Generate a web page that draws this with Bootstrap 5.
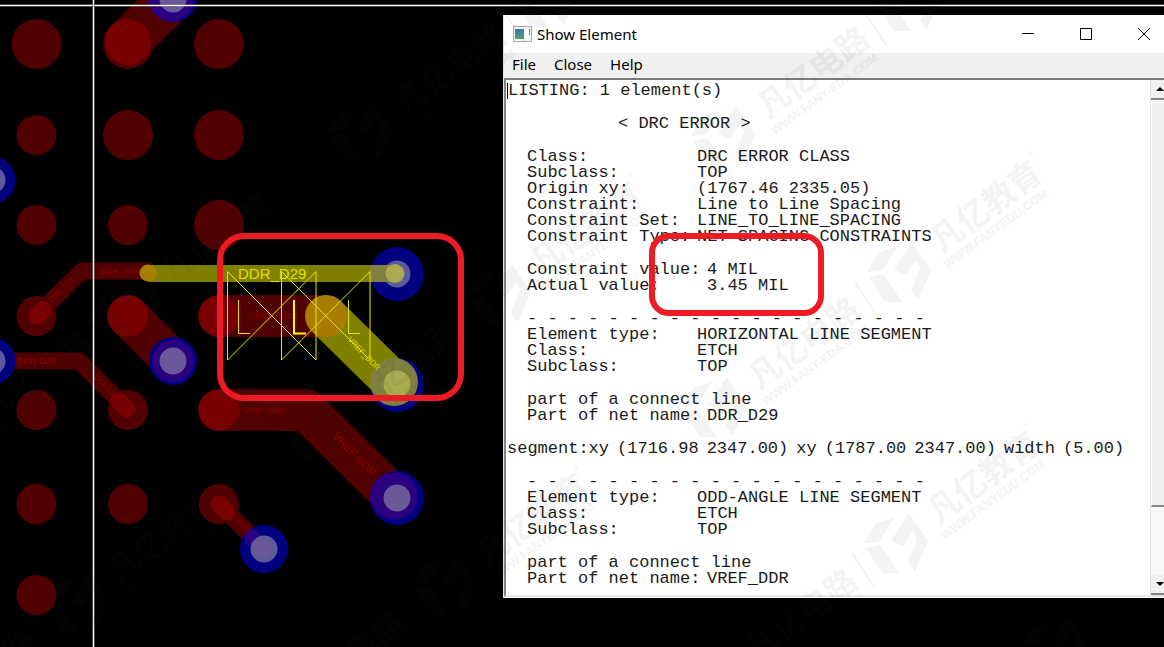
<!DOCTYPE html>
<html lang="en">
<head>
<meta charset="utf-8">
<meta name="viewport" content="width=device-width, initial-scale=1">
<title>Show Element</title>
<link href="https://cdn.jsdelivr.net/npm/bootstrap@5.3.0/dist/css/bootstrap.min.css" rel="stylesheet">
<style>
  body { background: #000; }
  .desk { font-family: "Noto Sans", sans-serif; color: #000; }
  .layer { position: absolute; inset: 0; width: 100%; height: 100%; }
  .overlay { pointer-events: none; }
  .board text { font-family: "Liberation Sans", sans-serif; }

  /* the dialog runs a little past the right edge of the desktop */
  .dialog-win { position: absolute; left: 503px; top: 15px; right: -9px; background: #fff; border-left: 1px solid #e3e3e3; }
  .title-bar { height: 38px; font-size: 15px; line-height: 38px; padding-left: 9px; }
  .win-btn { width: 58px; height: 38px; border: 0; background: none; padding: 0; }
  .menu-row { height: 25px; background: #f0f0f0; padding-left: 8px; gap: 18px; }
  .menu-btn { border: 0; background: none; padding: 0; font-size: 15px; line-height: 22px; color: #000; }
  .client { border-top: 2px solid #7a7a7a; border-left: 2px solid #858585; border-bottom: 2px solid #e6e6e6; margin-bottom: 1px; }
  .listing { font-family: "Liberation Mono", monospace; font-size: 17px; line-height: 16px; color: #1a1a1a;
             padding: 3px 0 8px 1px; white-space: nowrap; gap: 17px; }
  .first-line { border-left: 1px solid #000; }
  .inset-line { padding-left: 20px; }
  .heading-line { padding-left: 111px; }
  .key { width: 170px; }
  .key-wide { width: 180px; }

  .scroll-col { width: 23px; background: #f7f7f7; border-left: 1px solid #e3e3e3; }
  .scroll-btn { height: 20px; border: 0; border-bottom: 2px solid #858585; background: #f0f0f0; padding: 0 4px 0 0; line-height: 0; }
  .thumb { height: 407px; background: #f0f0f0; border: 1px solid #fff; border-bottom: 2px solid #858585; }
</style>
</head>
<body>
<main class="desk position-relative overflow-hidden min-vh-100">

  <svg class="layer board" role="img" aria-label="Board layout">
    <!-- pads -->
    <g fill="#500000">
      <circle cx="36.500" cy="44" r="25"/><circle cx="128" cy="44" r="25"/><circle cx="219" cy="44" r="25"/>
      <circle cx="36.500" cy="135" r="20"/><circle cx="128" cy="135" r="25"/><circle cx="219" cy="135" r="25"/>
      <circle cx="36.500" cy="225" r="20"/><circle cx="128" cy="225" r="20"/><circle cx="219" cy="225" r="25"/>
      <circle cx="36.500" cy="316" r="20"/><circle cx="36.500" cy="410" r="20"/><circle cx="128" cy="410" r="20"/>
      <circle cx="36.500" cy="504" r="20"/><circle cx="128" cy="504" r="20"/><circle cx="219" cy="504" r="20"/>
      <circle cx="36.500" cy="595" r="20"/>
    </g>
    <!-- traces -->
    <g fill="none" stroke="#500000" stroke-linecap="round" stroke-linejoin="round">
      <path stroke-width="46" d="M128 42L173-3"/>
      <path stroke-width="42" d="M128 316L173 361M219 316H326M219 410H306L394 497"/>
      <path stroke-width="17" d="M36 316L82 271H148M-5 361H79L128 410M219 504L264 549"/>
    </g>
    <g fill="#780000">
      <circle cx="128" cy="42" r="23"/><circle cx="128" cy="316" r="20.500"/><circle cx="219" cy="316" r="20.500"/><circle cx="219" cy="410" r="20.500"/>
    </g>
    <path fill="none" stroke="#780000" stroke-width="17" stroke-linecap="round" d="M37 316L43 310M119 401L127 409M219 504L227 512"/>
    <!-- vias -->
    <g fill="#000080">
      <circle cx="173" cy="-2" r="24"/><circle cx="-8" cy="180" r="23.500"/><circle cx="-8" cy="361" r="23.500"/>
      <circle cx="173" cy="361" r="24"/><circle cx="397" cy="274" r="27"/><circle cx="397" cy="385" r="27"/>
      <circle cx="397" cy="498" r="27"/><circle cx="264" cy="549" r="24"/>
    </g>
    <g fill="#2a0080">
      <circle cx="171" cy="-2" r="23"/><circle cx="173" cy="361" r="21"/><circle cx="394" cy="496" r="23.500"/>
    </g>
    <path stroke="#2a0080" stroke-width="17" stroke-linecap="round" d="M253 538L264 549"/>
    <g fill="#6c5898">
      <circle cx="173" cy="-1" r="13.500"/><circle cx="173" cy="361" r="13.500"/><circle cx="397" cy="498" r="13.500"/>
    </g>
    <g fill="#5b5b9b">
      <circle cx="-8" cy="180" r="13.500"/><circle cx="-8" cy="361" r="13.500"/><circle cx="397" cy="274" r="13.500"/><circle cx="264" cy="549" r="13.500"/>
    </g>
    <circle cx="262" cy="548" r="10" fill="#6c5898"/>
    <!-- highlighted nets -->
    <path stroke="#808000" stroke-width="17" d="M148 273.500H388"/>
    <path stroke="#808040" stroke-width="17" d="M370 273.500H390"/>
    <circle cx="148" cy="273" r="8.500" fill="#a88000"/>
    <circle cx="395" cy="273.500" r="9.500" fill="#aaaa50"/>
    <path stroke="#808000" stroke-width="42" d="M326 316L386 375"/>
    <circle cx="326" cy="316" r="21" fill="#a87c00"/>
    <circle cx="394" cy="382" r="24" fill="#808040"/>
    <circle cx="397" cy="384" r="13.500" fill="#aaaa50"/>
    <!-- net names along the traces -->
    <g fill="#8c0000" font-size="9">
      <text x="101" y="274" font-size="8">DDR_D29</text>
      <text x="17" y="364">DDR D28</text>
      <text x="249" y="319">VREF_DDR</text>
      <text x="244" y="413" font-size="8">VREF DDR</text>
      <text transform="translate(51 303) rotate(-45)" font-size="7">DDR_D29</text>
      <text transform="translate(93 378) rotate(45)" font-size="7">DDR D28</text>
      <text transform="translate(332 437) rotate(45)" font-size="11">VREF DDR</text>
      <text transform="translate(234 520) rotate(45)" font-size="7">VREF</text>
    </g>
    <text x="238" y="279" font-size="15" fill="#e0e000">DDR_D29</text>
    <text transform="translate(347 340) rotate(46)" font-size="8" fill="#e0e000">VREF_DDR</text>
    <!-- error markers -->
    <g fill="none" stroke="#e6e600">
      <path d="M227.500 271.500V360L316 271.500V360ZM281.500 271.500V360L370 271.500V360Z"/>
      <path d="M238.500 300V333.500H250M348.500 300V333.500H360"/>
      <path stroke-width="2" d="M294 300V333.500H306" stroke="#ffff00"/>
    </g>
    <path d="M0 5.500H4000M93.500 0V4000" stroke="#888" stroke-width="3" opacity=".5"/>
    <path d="M0 5.500H4000M93.500 0V4000" stroke="#fff"/>
  </svg>

  <section class="dialog-win" aria-label="Show Element">
    <header class="title-bar d-flex align-items-center">
      <svg width="20" height="16" viewBox="0 0 20 16" class="flex-shrink-0" aria-hidden="true">
        <defs><linearGradient id="pane" x1="0" y1="0" x2="0" y2="1"><stop offset="0" stop-color="#3f78b4"/><stop offset="1" stop-color="#4da670"/></linearGradient></defs>
        <rect x=".5" y=".5" width="18" height="15" fill="#f4f4f6" stroke="#a7abb0"/>
        <rect x="2" y="3" width="9" height="10" fill="url(#pane)"/>
        <rect x="12" y="3" width="4" height="10" fill="#fff"/>
        <rect x="16" y="3" width="1" height="6" fill="url(#pane)"/>
      </svg>
      <span class="ms-1 me-auto">Show Element</span>
      <button class="win-btn" aria-label="Minimize"><svg width="12" height="12" class="d-block mx-auto"><path d="M0 5.500H12" stroke="#000"/></svg></button>
      <button class="win-btn" aria-label="Maximize"><svg width="12" height="12" class="d-block mx-auto"><path d="M.5.5H11.500V11.500H.5Z" fill="none" stroke="#000"/></svg></button>
      <button class="win-btn" aria-label="Close window"><svg width="12" height="12" class="d-block mx-auto"><path d="M0 0L12 12M12 0L0 12" stroke="#000"/></svg></button>
    </header>
    <nav class="menu-row d-flex align-items-start">
      <button class="menu-btn">File</button>
      <button class="menu-btn">Close</button>
      <button class="menu-btn">Help</button>
    </nav>
    <div class="client d-flex">
      <div class="listing flex-grow-1 d-flex flex-column">
        <div class="first-line">LISTING: 1 element(s)</div>
        <div class="heading-line">&lt; DRC ERROR &gt;</div>
        <div class="inset-line">
          <div class="d-flex"><span class="key">Class:</span><span>DRC ERROR CLASS</span></div>
          <div class="d-flex"><span class="key">Subclass:</span><span>TOP</span></div>
          <div class="d-flex"><span class="key">Origin xy:</span><span>(1767.46 2335.05)</span></div>
          <div class="d-flex"><span class="key">Constraint:</span><span>Line to Line Spacing</span></div>
          <div class="d-flex"><span class="key">Constraint Set:</span><span>LINE_TO_LINE_SPACING</span></div>
          <div class="d-flex"><span class="key">Constraint Type:</span><span>NET SPACING CONSTRAINTS</span></div>
        </div>
        <div class="inset-line">
          <div class="d-flex"><span class="key-wide">Constraint value:</span><span>4 MIL</span></div>
          <div class="d-flex"><span class="key-wide">Actual value:</span><span>3.45 MIL</span></div>
        </div>
        <div class="inset-line">
          <div>- - - - - - - - - - - - - - - - - - - -</div>
          <div class="d-flex"><span class="key">Element type:</span><span>HORIZONTAL LINE SEGMENT</span></div>
          <div class="d-flex"><span class="key">Class:</span><span>ETCH</span></div>
          <div class="d-flex"><span class="key">Subclass:</span><span>TOP</span></div>
        </div>
        <div class="inset-line">
          <div>part of a connect line</div>
          <div class="d-flex"><span class="key-wide">Part of net name:</span><span>DDR_D29</span></div>
        </div>
        <div class="d-flex gap-2"><span>segment:xy</span><span>(1716.98</span><span>2347.00)</span><span>xy</span><span>(1787.00</span><span>2347.00)</span><span>width</span><span>(5.00)</span></div>
        <div class="inset-line">
          <div>- - - - - - - - - - - - - - - - - - - -</div>
          <div class="d-flex"><span class="key">Element type:</span><span>ODD-ANGLE LINE SEGMENT</span></div>
          <div class="d-flex"><span class="key">Class:</span><span>ETCH</span></div>
          <div class="d-flex"><span class="key">Subclass:</span><span>TOP</span></div>
        </div>
        <div class="inset-line">
          <div>part of a connect line</div>
          <div class="d-flex"><span class="key-wide">Part of net name:</span><span>VREF_DDR</span></div>
        </div>
      </div>
      <div class="scroll-col d-flex flex-column flex-shrink-0">
        <button class="scroll-btn" aria-label="Scroll up"><svg width="8" height="4"><path d="M4 0L8 4H0Z"/></svg></button>
        <div class="thumb"></div>
        <button class="scroll-btn mt-auto" aria-label="Scroll down"><svg width="8" height="4"><path d="M4 4L8 0H0Z"/></svg></button>
      </div>
    </div>
  </section>

  <svg class="layer overlay" aria-hidden="true">
    <defs>
      <g id="cube">
        <path d="M-32 0L-21-19L-1-26L-14-6L-18-1ZM-30 5L-16 2L3 30H-14ZM-5-2L13-30L32-2L19 28L12 19L21-4L17-12L7 3Z"/>
      </g>
      <g id="mark" font-family="'Noto Sans CJK SC', sans-serif" font-weight="700">
        <use href="#cube"/>
        <path d="M-44 10L-21 45" stroke="#303030" stroke-width="2"/>
        <g transform="translate(42 -19) rotate(-36)">
          <text font-size="32">凡亿教育</text>
          <text x="128" y="-22" font-size="9">®</text>
          <text x="-4" y="17" font-size="12" font-family="'Liberation Sans', sans-serif">WWW.FANYEDU.COM</text>
        </g>
        <use href="#cube" x="-185" y="135"/>
        <g transform="translate(-140 118) rotate(-36)">
          <text font-size="32">凡亿电路</text>
          <text x="-4" y="17" font-size="12" font-family="'Liberation Sans', sans-serif">WWW.FANY-EDA.COM</text>
        </g>
      </g>
    </defs>
    <g fill="#303030" opacity=".06">
      <use href="#mark" x="908" y="1"/><use href="#mark" x="899" y="272"/><use href="#mark" x="896" y="543"/>
      <use href="#mark" x="545" y="-3"/><use href="#mark" x="499" y="294"/><use href="#mark" x="445" y="585"/>
      <use href="#mark" x="130" y="304"/><use href="#mark" x="76" y="603"/><use href="#cube" x="1055" y="645"/>
    </g>
    <g fill="none" stroke="#ed1c24" stroke-width="6">
      <rect x="220" y="236" width="241" height="162" rx="24"/>
      <rect x="652" y="236" width="169" height="77" rx="17"/>
    </g>
  </svg>
</main>
<script src="https://cdn.jsdelivr.net/npm/bootstrap@5.3.0/dist/js/bootstrap.bundle.min.js"></script>
</body>
</html>
